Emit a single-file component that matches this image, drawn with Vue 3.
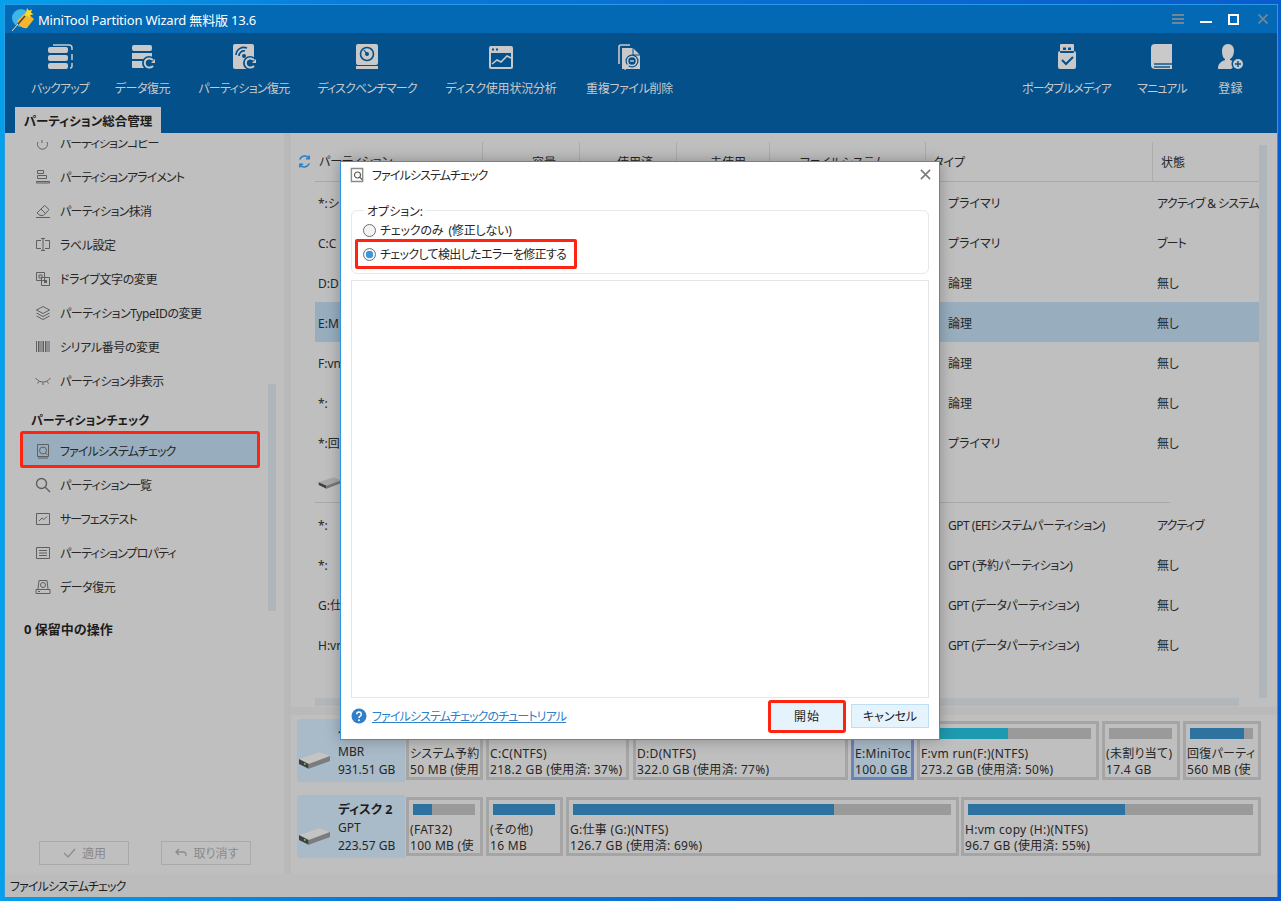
<script setup>
const G = '#c9c9c9'
const B = '#04508a'
const D = '#5f5f5f'
const rr = (x, y, w, h, r) =>
  `M${x + r} ${y}h${w - 2 * r}a${r} ${r} 0 0 1 ${r} ${r}v${h - 2 * r}a${r} ${r} 0 0 1 -${r} ${r}h-${w - 2 * r}a${r} ${r} 0 0 1 -${r} -${r}v-${h - 2 * r}a${r} ${r} 0 0 1 ${r} -${r}z`
const circ = (x, y, r) => `M${x - r} ${y}a${r} ${r} 0 1 0 ${2 * r} 0a${r} ${r} 0 1 0 -${2 * r} 0z`
// The reference's kana are narrower than Noto's: spread the difference over each label.
const tight = (text) => {
  const kana = (text.match(/[\u3040-\u30FF]/g) || []).length
  const kanji = (text.match(/[\u4E00-\u9FFF]/g) || []).length
  return { letterSpacing: ((-0.9 * kana + 0.25 * kanji) / text.length).toFixed(3) + 'px' }
}
const recover = [
  { d: circ(19, 19, 7), fill: B },
  { d: 'M23 16.2a4.6 4.6 0 1 0 0 5.6', stroke: G, sw: 2 },
  { d: 'M21 19h4v-4z', fill: G }
]
const tools = [
  { label: 'バックアップ', w: 56, parts: [
    { d: rr(1, 3, 20, 6, 2) + rr(1, 11, 20, 6, 2) + rr(1, 19, 20, 6, 2), fill: G },
    { d: 'M6 1h16a3 3 0 0 1 3 3v2M25 10v6M25 19v3a2 2 0 0 1-2 2', stroke: G, sw: 1.5 }
  ] },
  { label: 'データ復元', w: 57, parts: [
    { d: rr(2, 1, 20, 6, 2) + 'M2 9h20v6H2zM2 17h20v6a1 1 0 0 1-1 1H3a1 1 0 0 1-1-1z', fill: G },
    ...recover
  ] },
  { label: 'パーティション復元', w: 94, parts: [
    { d: rr(2, 0, 21, 25, 2), fill: G },
    { d: 'M5 11a8 8 0 0 1 11-7M8 12a5 5 0 0 1 6-5', stroke: B, sw: 1.6 },
    { d: circ(13, 12, 2), fill: B },
    ...recover
  ] },
  { label: 'ディスクベンチマーク', w: 100, parts: [
    { d: rr(2, 0, 22, 21, 2) + 'M2 22h22v3H2z', fill: G },
    { d: circ(13, 10, 6.5), stroke: B, sw: 1.6 },
    { d: circ(13, 10, 2), fill: B },
    { d: 'M10 6l3 4', stroke: B, sw: 1.2 }
  ] },
  { label: 'ディスク使用状況分析', w: 116, parts: [
    { d: rr(1, 2, 24, 23, 2), fill: G },
    { d: 'M3 9h20v14H3zM4 4.500h2v2H4zM8 4.500h2v2H8z', fill: B },
    { d: 'M4 20l5-4 4 2 6-6 4 2', stroke: G, sw: 1.6 }
  ] },
  { label: '重複ファイル削除', w: 89, parts: [
    { d: 'M2 20V3a2 2 0 0 1 2-2h9', stroke: G, sw: 1.6 },
    { d: 'M5 4h11l7 7v14H5z', fill: G },
    { d: 'M16 4v7h7', stroke: B, sw: 1 },
    { d: circ(15, 17, 6.5), fill: B },
    { d: circ(15, 17, 4.5), stroke: G, sw: 1.6 },
    { d: 'M13 17h4', stroke: G, sw: 1.4 },
    { d: 'M11.500 20.500l-4 5', stroke: G, sw: 2 }
  ] }
]
const rightTools = [
  { label: 'ポータブルメディア', w: 89, parts: [
    { d: rr(6, 0, 14, 9, 1) + rr(4, 7, 18, 18, 2), fill: G },
    { d: 'M9 3.500h3v2.500H9zM14 3.500h3v2.500h-3z', fill: B },
    { d: 'M8 16l4 4 7-7', stroke: B, sw: 2 }
  ] },
  { label: 'マニュアル', w: 52, parts: [
    { d: 'M2 4a4 4 0 0 1 4-4h17v25H6a4 4 0 0 1-4-4z', fill: G },
    { d: 'M5 20h20', stroke: B, sw: 1.4 },
    { d: 'M5 23h16', stroke: B, sw: 1.4 }
  ] },
  { label: '登録', w: 27, parts: [
    { d: 'M10 0c4 0 6 3 6 7s-2 7-4 8v1c3 1 6 2 7 4l-6 5H0c0-5 2-7 7-9v-1c-2-1-3-4-3-8s2-7 6-7z', fill: G },
    { d: circ(20, 20, 6.5), fill: B },
    { d: circ(20, 20, 5), fill: G },
    { d: 'M17 20h6M20 17v6', stroke: B, sw: 1.4 }
  ] }
]
const sideTop = [
  { label: 'パーティションコピー', parts: [{ d: 'M3 7a5 5 0 1 0 9 0M7 3v5', stroke: D }] },
  { label: 'パーティションアライメント', parts: [{ d: 'M2.500 1.500h6v3h-6zM2.500 6.500h9v3h-9zM1.500 12.500h13v1.500h-13z', stroke: D }] },
  { label: 'パーティション抹消', parts: [{ d: 'M2 10l7-7a1 1 0 0 1 1.400 0l3 3a1 1 0 0 1 0 1.400l-5 5H5zM6 6l4.500 4.500M1 14.500h14', stroke: D }] },
  { label: 'ラベル設定', parts: [{ d: 'M6 3.500H1.500v8H6M10 3.500h4.500v8H10M6 1.500h4M6 13.500h4M8 1.500v12', stroke: D }] },
  { label: 'ドライブ文字の変更', parts: [{ d: 'M1.500 1.500h8v8h-8zM6.500 6.500h8v8h-8zM4 4h3v3H4z', stroke: D }, { d: 'M9 9h3v3H9z', fill: D }] },
  { label: 'パーティションTypeIDの変更', parts: [{ d: 'M8 1.500l6.500 3.500L8 8.500 1.500 5zM1.500 8l6.500 3.500L14.500 8M1.500 11l6.500 3.500 6.500-3.500', stroke: D }] },
  { label: 'シリアル番号の変更', parts: [{ d: 'M1.500 2v11M3.500 2v11M5 2v11M7 2v11M8.500 2v11M10.500 2v11M12 2v11M14 2v11', stroke: D }] },
  { label: 'パーティション非表示', parts: [{ d: 'M1.500 6c3 4 10 4 13 0M4 8.500l-1.500 2M8 9.500v2.500M12 8.500l1.500 2M1.500 6l-1 -1M14.500 6l1 -1', stroke: D }] }
]
const sideCheck = [
  { label: 'ファイルシステムチェック', active: true, parts: [{ d: 'M2.500 1.500h11v12h-11zM3 15h10', stroke: D }, { d: circ(8, 7.500, 3.500) + 'M10.500 10l2 2', stroke: D }] },
  { label: 'パーティション一覧', parts: [{ d: circ(6.500, 6.500, 5) + 'M10 10l5 5', stroke: D, sw: 1.4 }] },
  { label: 'サーフェステスト', parts: [{ d: 'M1.500 2.500h13v11h-13zM4 10l3-3 2 1.500 3-3', stroke: D }] },
  { label: 'パーティションプロパティ', parts: [{ d: 'M1.500 2.500h13v11h-13zM4 5.500h8M4 8h8M4 10.500h8', stroke: D }] },
  { label: 'データ復元', parts: [{ d: 'M3 10l1-8.500h8l1 8.500M1 10.500h14v4H1zM3 12.500h2', stroke: D }, { d: circ(8, 6, 2.500), stroke: D }] }
]
const rows = [
  { n: '*:シ', t: 'プライマリ', s: 'アクティブ & システム' },
  { n: 'C:C', t: 'プライマリ', s: 'ブート' },
  { n: 'D:D', t: '論理', s: '無し' },
  { n: 'E:M', t: '論理', s: '無し', sel: true },
  { n: 'F:vn', t: '論理', s: '無し' },
  { n: '*:', t: '論理', s: '無し' },
  { n: '*:回', t: 'プライマリ', s: '無し' }
]
const rows2 = [
  { n: '*:', t: 'GPT (EFIシステムパーティション)', s: 'アクティブ' },
  { n: '*:', t: 'GPT (予約パーティション)', s: '無し' },
  { n: 'G:仕', t: 'GPT (データパーティション)', s: '無し' },
  { n: 'H:vn', t: 'GPT (データパーティション)', s: '無し' }
]
const disk1 = [
  { w: 77, pct: 40, a: 'システム予約', b: '50 MB (使用' },
  { w: 143, mg: 3, pct: 37, a: 'C:C(NTFS)', b: '218.2 GB (使用済: 37%)' },
  { w: 215, mg: 4, pct: 77, a: 'D:D(NTFS)', b: '322.0 GB (使用済: 77%)' },
  { w: 63, mg: 3, pct: 20, a: 'E:MiniToc', b: '100.0 GB', sel: true },
  { w: 182, mg: 3, pct: 50, teal: true, a: 'F:vm run(F:)(NTFS)', b: '273.2 GB (使用済: 50%)' },
  { w: 78, mg: 3, pct: 0, a: '(未割り当て)', b: '17.4 GB' },
  { w: 78, mg: 3, pct: 85, a: '回復パーティ', b: '560 MB (使' }
]
const disk2 = [
  { w: 77, pct: 31, a: '(FAT32)', b: '100 MB (使' },
  { w: 77, mg: 3, pct: 100, a: '(その他)', b: '16 MB' },
  { w: 393, mg: 3, pct: 69, a: 'G:仕事 (G:)(NTFS)', b: '126.7 GB (使用済: 69%)' },
  { w: 300, mg: 2, pct: 55, a: 'H:vm copy (H:)(NTFS)', b: '96.7 GB (使用済: 55%)' }
]
const disks = [
  { name: 'ディスク 1', type: 'MBR', size: '931.51 GB', parts: disk1 },
  { name: 'ディスク 2', type: 'GPT', size: '223.57 GB', parts: disk2 }
]
</script>

<template>
  <div class="desktop">
    <div class="window">
      <header class="titlebar">
        <svg class="logo" viewBox="0 0 26 26" width="26" height="26">
          <circle cx="11" cy="12" r="9" fill="#3fb4e8" />
          <path d="M7 15l9-9 8 7-7 9c-4 1-8-2-10-7z" fill="#f5b52e" />
          <path d="M17 2l2 2.500 3-1-1 3 2.500 2-3 .5-1 3-2-2.500-3 .5 1.500-3z" fill="#f7d838" />
          <path d="M2 25L15 10" stroke="#444" stroke-width="1.500" />
          <path d="M2 25L8 18" stroke="#eee" stroke-width="1" />
        </svg>
        <span class="apptitle">MiniTool Partition Wizard 無料版 13.6</span>
        <div class="winctl">
          <svg viewBox="0 0 12 10" width="12" height="10"><path d="M0 1h12M0 5h12M0 9h12" stroke="#6f8796" stroke-width="2" /></svg>
          <span class="min"></span>
          <span class="max"></span>
          <svg class="winclose" viewBox="0 0 10 10" width="10" height="10"><path d="M.5 .5l9 9M9.500 .5l-9 9" stroke="#6f8796" stroke-width="1.800" /></svg>
        </div>
      </header>

      <div class="toolbar">
        <div class="toolrow">
          <div class="toolgroup">
            <div v-for="t in tools" :key="t.label" class="tool" :style="{ width: t.w + 'px' }">
              <svg viewBox="0 0 26 26" width="26" height="26">
                <path v-for="(p, i) in t.parts" :key="i" :d="p.d" :fill="p.fill || 'none'" :stroke="p.stroke || 'none'" :stroke-width="p.sw || 0" fill-rule="evenodd" />
              </svg>
              <span :style="tight(t.label)">{{ t.label }}</span>
            </div>
          </div>
          <div class="toolgroup right">
            <div v-for="t in rightTools" :key="t.label" class="tool" :style="{ width: t.w + 'px' }">
              <svg viewBox="0 0 26 26" width="26" height="26">
                <path v-for="(p, i) in t.parts" :key="i" :d="p.d" :fill="p.fill || 'none'" :stroke="p.stroke || 'none'" :stroke-width="p.sw || 0" fill-rule="evenodd" />
              </svg>
              <span :style="tight(t.label)">{{ t.label }}</span>
            </div>
          </div>
        </div>
        <div class="tab">パーティション総合管理</div>
      </div>

      <div class="body">
        <aside class="sidebar">
          <div class="sidescroll">
            <div class="sidelist">
              <div v-for="s in sideTop" :key="s.label" class="sideitem">
                <svg viewBox="0 0 16 16" width="16" height="16"><path v-for="(p, i) in s.parts" :key="i" :d="p.d" :fill="p.fill || 'none'" :stroke="p.stroke || 'none'" :stroke-width="p.sw || 1" /></svg>
                <span :style="tight(s.label)">{{ s.label }}</span>
              </div>
              <div class="sidehead">パーティションチェック</div>
              <div v-for="s in sideCheck" :key="s.label" class="sideitem" :class="{ active: s.active }">
                <svg viewBox="0 0 16 16" width="16" height="16"><path v-for="(p, i) in s.parts" :key="i" :d="p.d" :fill="p.fill || 'none'" :stroke="p.stroke || 'none'" :stroke-width="p.sw || 1" /></svg>
                <span :style="tight(s.label)">{{ s.label }}</span>
              </div>
            </div>
            <div class="sidethumb"></div>
          </div>
          <div class="pending">0 保留中の操作</div>
          <div class="actions">
            <div class="act">
              <svg viewBox="0 0 14 12" width="14" height="12"><path d="M2 6l4 4 7-8" fill="none" stroke="#8c8c8c" stroke-width="1.300" /></svg>
              適用
            </div>
            <div class="act">
              <svg viewBox="0 0 14 12" width="14" height="12"><path d="M5 2L2 5l3 3M2 5h7a3 3 0 0 1 3 3v1" fill="none" stroke="#8c8c8c" stroke-width="1.300" /></svg>
              取り消す
            </div>
          </div>
        </aside>

        <main class="main">
          <div class="tablewrap">
            <div class="tableinner">
              <div class="thead">
                <div class="th first">
                  <svg class="refresh" viewBox="0 0 16 16" width="15" height="15"><path d="M13 5A5.500 5.500 0 0 0 3 6M3 11a5.500 5.500 0 0 0 10-1M13 1.500V5H9.500M3 14.500V11h3.500" fill="none" stroke="#2b7fc7" stroke-width="1.600" /></svg>
                  パーティション
                </div>
                <div class="th c2">容量</div>
                <div class="th c3">使用済</div>
                <div class="th c4">未使用</div>
                <div class="th c5">ファイルシステム</div>
                <div class="th c6">タイプ</div>
                <div class="th c7">状態</div>
              </div>
              <div v-for="(r, i) in rows" :key="i" class="tr" :class="{ sel: r.sel }">
                <div class="td name">{{ r.n }}</div>
                <div class="td type">{{ r.t }}</div>
                <div class="td state" :style="tight(r.s)">{{ r.s }}</div>
              </div>
              <div class="diskrow">
                <svg viewBox="0 0 34 18" width="24" height="14"><path d="M1 8L22 1l11 4-21 8z" fill="#a8a8a8" /><path d="M1 8l11 5v4L1 12z" fill="#3f3f3f" /><path d="M12 13l21-8v4l-21 8z" fill="#777" /></svg>
                <span>ディスク 2</span>
              </div>
              <div v-for="(r, i) in rows2" :key="i" class="tr">
                <div class="td name">{{ r.n }}</div>
                <div class="td type" :style="tight(r.t)">{{ r.t }}</div>
                <div class="td state" :style="tight(r.s)">{{ r.s }}</div>
              </div>
            </div>
            <div class="vbar"></div>
          </div>
          <div class="hbar"></div>
          <div class="splitter"></div>
          <div class="diskmap">
            <div v-for="d in disks" :key="d.name" class="disk">
              <div class="disklabel">
                <svg viewBox="0 0 34 20" width="33" height="20"><path d="M1 9L22 2l11 4-21 8-2 0z" fill="#c4c4c4" /><path d="M1 9l10 5v5L1 14z" fill="#3f3f3f" /><path d="M11 14l22-8v5l-22 8z" fill="#7c7c7c" /><circle cx="7" cy="14" r="1" fill="#6fd06f" /></svg>
                <div class="disktext">
                  <b>{{ d.name }}</b>
                  <span>{{ d.type }}</span>
                  <span>{{ d.size }}</span>
                </div>
              </div>
              <div class="parts">
                <div v-for="p in d.parts" :key="p.a" class="part" :class="{ sel: p.sel }" :style="{ width: p.w + 'px', marginLeft: (p.mg || 0) + 'px' }">
                  <div class="track"><div class="fill" :class="{ teal: p.teal }" :style="{ width: p.pct + '%' }"></div></div>
                  <div class="ptext">{{ p.a }}</div>
                  <div class="ptext">{{ p.b }}</div>
                </div>
              </div>
            </div>
          </div>
        </main>
      </div>

      <footer class="status" :style="tight('ファイルシステムチェック')">ファイルシステムチェック</footer>
    </div>

    <section class="dialog">
      <div class="dtitle">
        <svg viewBox="0 0 16 16" width="15" height="16"><path d="M1.500 1h12v14h-12z" fill="none" stroke="#8a8a8a" stroke-width="1.500" /><circle cx="8" cy="8" r="3.200" fill="none" stroke="#555" stroke-width="1.200" /><path d="M10.500 10.500l2.500 2.500" stroke="#555" stroke-width="1.300" /></svg>
        <span :style="tight('ファイルシステムチェック')">ファイルシステムチェック</span>
        <svg class="dclose" viewBox="0 0 12 12" width="11" height="11"><path d="M1 1l10 10M11 1L1 11" stroke="#7c7c7c" stroke-width="1.800" /></svg>
      </div>
      <div class="group">
        <span class="legend">オプション:</span>
        <div class="radio-row"><i class="radio"></i><span class="opt1">チェックのみ (修正しない)</span></div>
        <div class="radio-row"><span class="marked"><i class="radio on"></i><span :style="tight('チェックして検出したエラーを修正する')">チェックして検出したエラーを修正する</span></span></div>
      </div>
      <div class="logbox"></div>
      <div class="dfoot">
        <svg viewBox="0 0 16 16" width="16" height="16"><circle cx="8" cy="8" r="7.500" fill="#2f80c8" /><path d="M5.700 6.200a2.300 2.300 0 1 1 3.500 2c-.8.500-1.200.9-1.200 1.800" fill="none" stroke="#fff" stroke-width="1.500" /><circle cx="8" cy="12.200" r="1" fill="#fff" /></svg>
        <a class="link" :style="tight('ファイルシステムチェックのチュートリアル')">ファイルシステムチェックのチュートリアル</a>
        <button class="btn start">開始</button>
        <button class="btn cancel">キャンセル</button>
      </div>
    </section>
  </div>
</template>

<style scoped>
.desktop {
  position: relative;
  width: 1281px;
  height: 901px;
  padding: 4px 3px 4px 4px;
  box-sizing: border-box;
  overflow: hidden;
  background: linear-gradient(90deg, #05a0ea 0, #0a78d8 30%, #0a5ccc 100%);
  font-family: "Noto Sans", "Noto Sans CJK JP", sans-serif;
  font-size: 12px;
  font-feature-settings: "palt";
  color: #262626;
}
.window {
  display: flex;
  flex-direction: column;
  height: 100%;
  border: 1px solid #2a9be6;
  border-bottom-width: 0;
  box-sizing: border-box;
  background: #bfbfbf;
}
.titlebar {
  display: flex;
  align-items: center;
  flex: none;
  height: 28px;
  padding-left: 5px;
  background: #0469b4;
  color: #fff;
}
.logo { flex: none; }
.apptitle { margin-left: 2px; font-size: 13px; letter-spacing: -.2px; }
.winctl {
  display: flex;
  align-items: center;
  margin-left: auto;
  padding-right: 9px;
  gap: 16px;
}
.winclose { margin-left: 3px; }
.min { width: 12px; height: 2px; margin-top: 6px; background: #fff; }
.max { width: 11px; height: 11px; box-sizing: border-box; border: 2px solid #fff; }
.toolbar {
  flex: none;
  height: 100px;
  display: flex;
  flex-direction: column;
  background: #04508a;
}
.toolrow {
  display: flex;
  justify-content: space-between;
  padding: 11px 33px 0 27px;
  height: 74px;
  box-sizing: border-box;
}
.toolgroup { display: flex; gap: 26px; }
.toolgroup.right { gap: 25px; }
.toolgroup.right .tool:last-child { margin-left: 4px; }
.tool {
  display: flex;
  flex-direction: column;
  align-items: center;
  color: #c9c9c9;
  white-space: nowrap;
}
.tool svg { flex: none; }
.tool span { margin-top: 10px; line-height: 18px; }
.tab {
  align-self: flex-start;
  margin-left: 10px;
  height: 26px;
  width: 146px;
  line-height: 30px;
  text-align: center;
  background: #bfbfbf;
  color: #1c1c1c;
  font-weight: 700;
  font-size: 12.500px;
  white-space: nowrap;
}
.body { flex: 1; display: flex; min-height: 0; }
.sidebar {
  flex: none;
  width: 279px;
  padding-top: 7px;
  display: flex;
  flex-direction: column;
  background: #bfbfbf;
}
.sidescroll {
  flex: none;
  height: 472px;
  display: flex;
  overflow: hidden;
}
.sidelist { width: 262px; margin-top: -14px; flex: none; }
.sideitem {
  position: relative;
  display: flex;
  align-items: center;
  height: 34px;
  margin-left: 15px;
  width: 240px;
  padding-left: 15px;
  box-sizing: border-box;
  gap: 9px;
  white-space: nowrap;
}
.sideitem svg { flex: none; }
.sidehead {
  margin: 9px 0 1px 26px;
  height: 26px;
  line-height: 28px;
  font-weight: 700;
  color: #1c1c1c;
}
.sideitem.active { background: #98aebf; }
.sideitem.active::after {
  content: "";
  position: absolute;
  inset: -3px 0 0 0;
  border: 3px solid #ff2312;
  border-radius: 3px;
}
.sidethumb {
  width: 8px;
  height: 227px;
  margin: 244px 0 0 1px;
  background: #aeb6bc;
  flex: none;
}
.pending {
  height: 34px;
  line-height: 35px;
  padding-left: 19px;
  font-weight: 700;
  font-size: 13px;
  color: #1c1c1c;
}
.actions {
  margin-top: auto;
  display: flex;
  gap: 32px;
  padding: 0 0 9px 34px;
}
.act {
  width: 90px;
  height: 24px;
  box-sizing: border-box;
  border: 1px solid #a9a9a9;
  display: flex;
  align-items: center;
  justify-content: center;
  gap: 6px;
  color: #8a8a8a;
}
.main {
  flex: 1;
  min-width: 0;
  display: flex;
  flex-direction: column;
  border-left: 7px solid #b9b9b9;
  padding-top: 9px;
}
.tablewrap {
  display: flex;
  height: 556px;
  flex: none;
  padding-left: 24px;
}
.tableinner { width: 944px; flex: none; }
.thead {
  display: flex;
  height: 40px;
  border-bottom: 1px solid #a8a8a8;
  box-sizing: border-box;
}
.th {
  flex: none;
  height: 39px;
  line-height: 42px;
  padding-left: 5px;
  box-sizing: border-box;
  border-right: 1px solid #adadad;
  white-space: nowrap;
}
.th.first { margin-left: -24px; width: 192px; padding-left: 6px; display: flex; align-items: center; gap: 7px; }
.c2 { width: 97px; padding-left: 49px; }
.c3 { width: 97px; padding-left: 37px; }
.c4 { width: 93px; padding-left: 33px; }
.c5 { width: 156px; padding-left: 30px; }
.c6 { width: 227px; padding-left: 7px; }
.c7 { width: 106px; padding-left: 8px; border-right: 0; }
.tr {
  display: flex;
  height: 40px;
  align-items: center;
  padding-top: 2px;
  box-sizing: border-box;
  white-space: nowrap;
  overflow: hidden;
}
.tr.sel { background: #98aebf; }
.td { overflow: hidden; }
.name { width: 633px; padding-left: 3px; box-sizing: border-box; flex: none; }
.type { width: 209px; flex: none; }
.state { width: 102px; flex: none; }
.diskrow {
  display: flex;
  align-items: center;
  gap: 12px;
  height: 41px;
  margin-bottom: 1px;
  border-bottom: 1px solid #a8a8a8;
  box-sizing: border-box;
  width: 855px;
  padding: 2px 0 0 3px;
  font-weight: 700;
}
.vbar {
  flex: none;
  width: 8px;
  margin-top: 3px;
  background: #afb6bb;
}
.hbar {
  flex: none;
  height: 8px;
  width: 924px;
  margin-left: 24px;
  background: #b2b7bb;
}
.splitter { flex: none; height: 8px; margin-top: 1px; background: #bababa; }
.diskmap {
  flex: 1;
  padding: 4px 0 0 6px;
  display: flex;
  flex-direction: column;
  gap: 13px;
}
.disk { display: flex; height: 63px; flex: none; }
.disklabel {
  flex: none;
  width: 108px;
  background: #a9bac8;
  display: flex;
  align-items: center;
  padding-left: 1px;
  box-sizing: border-box;
  border-radius: 3px 0 0 3px;
}
.disklabel svg { margin-top: 18px; flex: none; }
.disktext {
  display: flex;
  flex-direction: column;
  margin-left: 7px;
  line-height: 18px;
  padding-top: 3px;
  white-space: nowrap;
}
.disktext b { color: #1c1c1c; font-size: 12.500px; }
.parts { display: flex; padding-top: 2px; height: 59px; margin-left: 1px; }
.part {
  flex: none;
  box-sizing: border-box;
  border: 3px solid #a5a5a5;
  padding: 4px 1px 0 1px;
  overflow: hidden;
  height: 59px;
  background: #bfbfbf;
}
.part.sel { border-color: #6c82b8; background: #a9bac8; }
.track {
  height: 11px;
  margin: 0 4px 7px 3px;
  background: #9a9a9a;
  display: flex;
}
.fill { background: #2e73a0; height: 100%; }
.fill.teal { background: #1e9ab0; }
.ptext {
  line-height: 16px;
  letter-spacing: .3px;
  white-space: nowrap;
  overflow: hidden;
}
.status {
  flex: none;
  height: 23px;
  line-height: 26px;
  padding-left: 5px;
  background: #bcbcbc;
  color: #1c1c1c;
}
.dialog {
  position: absolute;
  left: 340px;
  top: 161px;
  width: 600px;
  height: 579px;
  box-sizing: border-box;
  border: 1px solid #2b95e8;
  background: #fff;
  box-shadow: 0 0 14px rgba(0, 0, 0, .28);
  padding: 0 10px;
  display: flex;
  flex-direction: column;
}
.dtitle {
  flex: none;
  height: 25px;
  display: flex;
  align-items: center;
  gap: 7px;
  margin-left: -1px;
}
.dclose { margin-left: auto; margin-right: -2px; }
.group {
  position: relative;
  flex: none;
  margin-top: 23px;
  height: 64px;
  box-sizing: border-box;
  border: 1px solid #e8e8e8;
  border-radius: 6px;
  padding-top: 7px;
}
.legend {
  position: absolute;
  left: 12px;
  top: -7px;
  padding: 0 3px;
  background: #fff;
  line-height: 16px;
}
.opt1 { letter-spacing: -.15px; word-spacing: 2px; }
.radio-row { display: flex; align-items: center; height: 24px; padding-left: 11px; }
.marked { position: relative; display: inline-flex; align-items: center; height: 24px; }
.marked::after {
  content: "";
  position: absolute;
  left: -8px;
  top: -3px;
  right: -11px;
  bottom: -3px;
  border: 3px solid #ff2312;
  border-radius: 2px;
}
.radio {
  flex: none;
  width: 13px;
  height: 13px;
  box-sizing: border-box;
  margin-right: 4px;
  border: 1px solid #6f6f6f;
  border-radius: 50%;
  background: #f3f3f3;
}
.radio.on { background: radial-gradient(circle, #3a96dd 0 3.500px, #f3f3f3 4px); }
.logbox {
  flex: none;
  margin-top: 6px;
  height: 418px;
  box-sizing: border-box;
  border: 1px solid #e5e5e5;
}
.dfoot {
  flex: none;
  height: 36px;
  display: flex;
  align-items: center;
}
.link { margin-left: 5px; color: #2f80c8; text-decoration: underline; }
.btn {
  font: inherit;
  font-feature-settings: inherit;
  color: #1c1c1c;
  background: #e5f3fd;
  padding: 0;
  box-sizing: border-box;
}
.start {
  margin-left: auto;
  width: 78px;
  height: 33px;
  border: 3px solid #ff2312;
  border-radius: 3px;
  letter-spacing: 1px;
}
.cancel {
  margin-left: 5px;
  width: 78px;
  height: 24px;
  border: 1px solid #bde0f7;
}
</style>
